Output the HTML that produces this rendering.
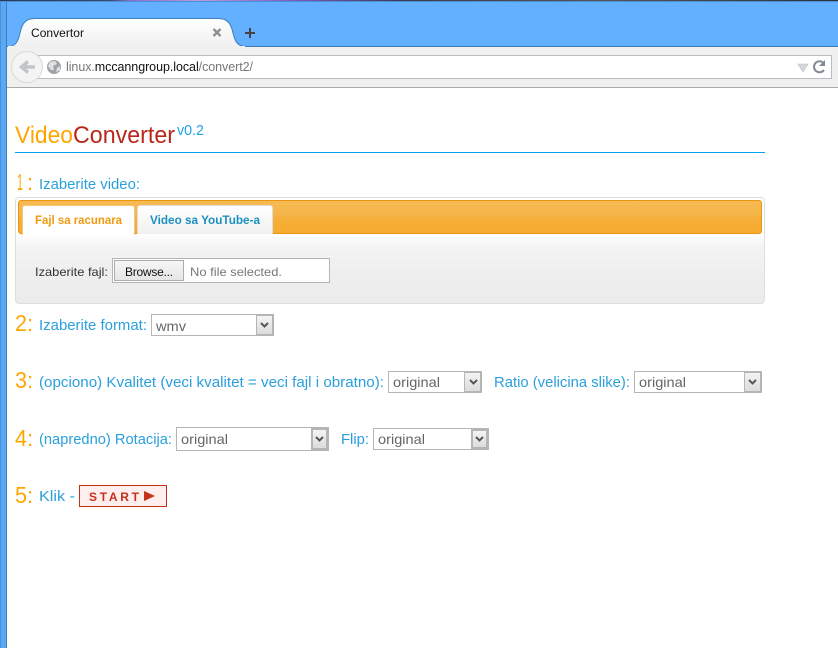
<!DOCTYPE html>
<html><head><meta charset="utf-8"><title>Convertor</title>
<style>
html,body{margin:0;padding:0;width:838px;height:648px;overflow:hidden;background:#fff}
.a{position:absolute;box-sizing:border-box}
svg{position:absolute;left:0;top:0}
.sel{position:absolute;box-sizing:border-box;background:#fff;border:1px solid #b5b5b5}
.sel i{position:absolute;right:0;top:0;bottom:0;width:17px;background:linear-gradient(#f4f4f4,#dcdcdc);border:1px solid #b5b5b5;box-sizing:border-box}
</style></head><body>
<div class="a" style="left:0;top:0;width:838px;height:648px;background:#fff"></div>
<div class="a" style="left:0;top:0;width:838px;height:1px;background:linear-gradient(90deg,#2a3a50 0,#3a4a68 110px,#8a70c8 130px,#b89ae0 200px,#7a58b8 300px,#3a3a50 400px,#555 600px,#2a3040 838px)"></div>
<div class="a" style="left:0;top:1px;width:838px;height:1px;background:#4a90d8"></div>
<div class="a" style="left:0;top:2px;width:838px;height:45px;background:#62b0ff"></div>
<div class="a" style="left:0;top:46px;width:838px;height:1px;background:#3f7fb8"></div>
<div class="a" style="left:0;top:2px;width:7px;height:646px;background:#5aa8f5;border-right:1px solid #3f7fb8;border-left:1px solid #4a90d8"></div>
<div class="a" style="left:7px;top:47px;width:831px;height:41px;background:#f0f0f0;border-bottom:1px solid #a8a8a8"></div>
<svg width="838" height="100" viewBox="0 0 838 100">
<defs><linearGradient id="t" x1="0" y1="0" x2="0" y2="1"><stop offset="0" stop-color="#fff"/><stop offset="1" stop-color="#f0f0f0"/></linearGradient></defs>
<path d="M7 46.500H9C15 46.500 18 42 20 33C22 24 25 18.500 35 18.500H218C228 18.500 231 24 233 33C235 42 238 46.500 246 46.500" fill="url(#t)" stroke="#3f7fb8"/>
<path d="M8 47H245" stroke="#f0f0f0" stroke-width="2"/>
<rect x="30.500" y="55.500" width="801" height="23" fill="#fff" stroke="#b8bcc0"/>
<circle cx="27" cy="67" r="15.500" fill="#f4f4f4" stroke="#d8d8d8"/>
<path d="M35 67H23M28 61.500L21.500 67L28 72.500" fill="none" stroke="#c2c6ca" stroke-width="3.500"/>
<circle cx="54" cy="67" r="7" fill="#a0a3a6"/>
<path d="M50 62L55 61L57 64L53 66L54 70L51 70L48 66ZM57 68L60 66L60 70L56 72Z" fill="#dfe1e3"/>
<path d="M213.500 29L220.500 36M220.500 29L213.500 36" stroke="#8a9096" stroke-width="2.400"/>
<path d="M245 33H255M250 28V38" stroke="#444" stroke-width="2"/>
<path d="M798 64H808L803 72Z" fill="#d4d8de" stroke="#b8bcc4" stroke-width=".6"/>
<path d="M823 62.500A5.500 5.500 0 1 0 824 70" fill="none" stroke="#7f8a94" stroke-width="2"/>
<path d="M819 66H825V60Z" fill="#7f8a94"/>
<text x="31" y="37" font-family="Liberation Sans" font-size="12" fill="#111" textLength="53">Convertor</text>
<text x="66" y="71" font-family="Liberation Sans" font-size="12.500" fill="#777" textLength="187">linux.<tspan fill="#111">mccanngroup.local</tspan>/convert2/</text>
</svg>
<div class="a" style="left:15px;top:152px;width:750px;height:1px;background:#00a2f2"></div>
<div class="a" style="left:15px;top:197px;width:750px;height:107px;border:1px solid #dedede;border-radius:4px;background:linear-gradient(#fff 36px,#f4f4f4 48px,#eee 75px,#ececec)"></div>
<div class="a" style="left:18px;top:200px;width:744px;height:34px;border:1px solid #e8950f;border-radius:3px;background:linear-gradient(#f7ba52 0,#f6b548 45%,#f6ae38 55%,#f6ab30)"></div>
<div class="a" style="left:22px;top:205px;width:113px;height:30px;background:#fff;border:1px solid #f4c878;border-bottom:0;border-radius:3px 3px 0 0"></div>
<div class="a" style="left:137px;top:205px;width:136px;height:29px;background:linear-gradient(#fff,#f1f1f1);border:1px solid #ddd;border-bottom:0;border-radius:3px 3px 0 0"></div>
<div class="a" style="left:112px;top:258px;width:218px;height:25px;background:#fff;border:1px solid #b5b5b5"></div>
<div class="a" style="left:114px;top:260px;width:70px;height:21px;background:linear-gradient(#f6f6f6,#e6e6e6);border:1px solid #adadad"></div>
<div class="sel" style="left:151px;top:314px;width:123px;height:22px"><i></i></div>
<div class="sel" style="left:388px;top:371px;width:94px;height:22px"><i></i></div>
<div class="sel" style="left:634px;top:371px;width:128px;height:22px"><i></i></div>
<div class="sel" style="left:176px;top:427px;width:153px;height:24px"><i style="border-width:2px"></i></div>
<div class="sel" style="left:373px;top:428px;width:116px;height:22px"><i style="border-width:2px"></i></div>
<div class="a" style="left:79px;top:485px;width:88px;height:22px;background:#feeeee;border:1px solid #c6311a"></div>
<svg width="838" height="648" viewBox="0 0 838 648" font-family="Liberation Sans">
<text x="15" y="143" font-size="24" fill="#ffa500" textLength="58" lengthAdjust="spacingAndGlyphs">Video</text>
<text x="73" y="143" font-size="24" fill="#b8281c" textLength="102" lengthAdjust="spacingAndGlyphs">Converter</text>
<text x="177" y="135" font-size="15" fill="#1fa5e8" textLength="27" lengthAdjust="spacingAndGlyphs">v0.2</text>
<g font-size="23" fill="#ffa500">
<text x="17" y="190" textLength="6" lengthAdjust="spacingAndGlyphs">1</text><text x="27" y="190" font-size="22">:</text>
<text x="15" y="331" textLength="12" lengthAdjust="spacingAndGlyphs">2</text><text x="27" y="331" font-size="22">:</text>
<text x="15" y="388" textLength="12" lengthAdjust="spacingAndGlyphs">3</text><text x="27" y="388" font-size="22">:</text>
<text x="15" y="446" textLength="12" lengthAdjust="spacingAndGlyphs">4</text><text x="27" y="446" font-size="22">:</text>
<text x="15" y="503" textLength="12" lengthAdjust="spacingAndGlyphs">5</text><text x="27" y="503" font-size="22">:</text>
</g>
<g font-size="15" fill="#2a9fdc">
<text x="39" y="189" textLength="101" lengthAdjust="spacingAndGlyphs">Izaberite video:</text>
<text x="39" y="330" textLength="108" lengthAdjust="spacingAndGlyphs">Izaberite format:</text>
<text x="39" y="387" textLength="345" lengthAdjust="spacingAndGlyphs">(opciono) Kvalitet (veci kvalitet = veci fajl i obratno):</text>
<text x="494" y="387" textLength="136" lengthAdjust="spacingAndGlyphs">Ratio (velicina slike):</text>
<text x="39" y="444" textLength="133" lengthAdjust="spacingAndGlyphs">(napredno) Rotacija:</text>
<text x="341" y="444" textLength="28" lengthAdjust="spacingAndGlyphs">Flip:</text>
<text x="39" y="501" textLength="36" lengthAdjust="spacingAndGlyphs">Klik -</text>
</g>
<text x="35" y="224" font-size="12" font-weight="bold" fill="#f09a10" textLength="87" lengthAdjust="spacingAndGlyphs">Fajl sa racunara</text>
<text x="150" y="224" font-size="12" font-weight="bold" fill="#1b8fc0" textLength="110" lengthAdjust="spacingAndGlyphs">Video sa YouTube-a</text>
<text x="35" y="276" font-size="12" fill="#333" textLength="73" lengthAdjust="spacingAndGlyphs">Izaberite fajl:</text>
<text x="125" y="276" font-size="12" fill="#111" textLength="48">Browse...</text>
<text x="190" y="276" font-size="12" fill="#777" textLength="92" lengthAdjust="spacingAndGlyphs">No file selected.</text>
<g font-size="14" fill="#666">
<text x="156" y="331" textLength="30" lengthAdjust="spacingAndGlyphs">wmv</text>
<text x="393" y="387" textLength="47" lengthAdjust="spacingAndGlyphs">original</text>
<text x="639" y="387" textLength="47" lengthAdjust="spacingAndGlyphs">original</text>
<text x="181" y="444" textLength="47" lengthAdjust="spacingAndGlyphs">original</text>
<text x="378" y="444" textLength="47" lengthAdjust="spacingAndGlyphs">original</text>
</g>
<g fill="none" stroke="#555" stroke-width="2">
<path d="M261 323L264.500 326.500L268 323"/>
<path d="M470 380L473.500 383.500L477 380"/>
<path d="M749 380L752.500 383.500L756 380"/>
<path d="M316 437L319.500 440.500L323 437"/>
<path d="M476 437L479.500 440.500L483 437"/>
</g>
<text x="89" y="501" font-size="12" font-weight="bold" fill="#c6311a" textLength="50">START</text>
<path d="M144 491L155 496L144 501Z" fill="#c6311a"/>
</svg>
</body></html>
